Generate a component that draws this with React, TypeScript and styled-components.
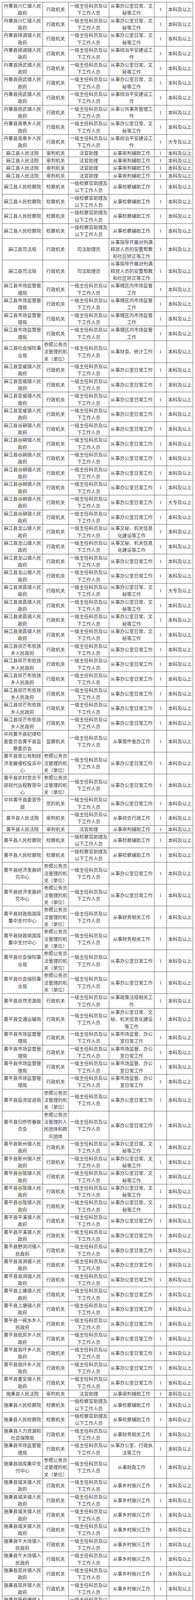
import React from 'react';
import styled, { createGlobalStyle } from 'styled-components';

const GlobalStyle = createGlobalStyle`
  html, body {
    margin: 0;
    padding: 0;
    background: #fff;
  }
`;

const Page = styled.div`
  padding: 5px 6px 6px 5px;
  background: #fff;
`;

const Sheet = styled.table`
  border-collapse: collapse;
  table-layout: fixed;
  width: 489px;
  font-family: "Noto Sans CJK SC", "Noto Sans", sans-serif;
  font-size: 12px;
  color: #3d3d3d;
`;

const Col = styled.col<{ $w: number }>`
  width: ${p => p.$w}px;
`;

const Cell = styled.td<{ $num?: boolean }>`
  border: 1px solid #5c5c5c;
  padding: 0 2px;
  line-height: 18.33px;
  text-align: center;
  vertical-align: middle;
  word-break: break-all;
  font-family: ${p => (p.$num ? '"Liberation Serif", serif' : 'inherit')};
  font-size: ${p => (p.$num ? '13px' : '12px')};
`;

const GOV = '行政机关';
const JOB = '一级主任科员及以下工作人员';
const PROC = '一级检察官助理及以下工作人员';
const REF = '参照公务员法管理的机关（单位）';
const OFFICE = '从事办公室日常工作';
const OFFICE_WM = '从事办公室日常、文秘等工作';
const RURAL = '从事乡村振兴工作';
const BK = '本科及以上';
const DZ = '大专及以上';

type Row = [string, string, string, string, string?];

const rep = (n: number, row: Row): Row[] => Array.from({ length: n }, () => row);

const rows: Row[] = [
  ...rep(2, ['丹寨县兴仁镇人民政府', GOV, JOB, OFFICE_WM]),
  ['丹寨县排调镇人民政府', GOV, JOB, OFFICE_WM],
  ['丹寨县排调镇人民政府', GOV, JOB, '从事综治平安建设工作'],
  ...rep(2, ['丹寨县扬武镇人民政府', GOV, JOB, OFFICE_WM]),
  ['丹寨县扬武镇人民政府', GOV, JOB, '从事综治平安建设工作'],
  ['丹寨县扬武镇人民政府', GOV, JOB, '从事公共事务管理工作'],
  ['丹寨县南皋乡人民政府', GOV, JOB, OFFICE_WM],
  ['丹寨县南皋乡人民政府', GOV, JOB, '从事综治平安建设工作', DZ],
  ...rep(4, ['麻江县人民法院', '审判机关', '法官助理', '从事审判辅助工作']),
  ...rep(4, ['麻江县人民检察院', '检察机关', PROC, '从事检察辅助工作']),
  ...rep(2, ['麻江县司法局', GOV, '司法助理员', '从事指导开展对刑满释放人员的安置帮教和社区矫正等工作']),
  ...rep(4, ['麻江县市场监督管理局', GOV, JOB, '从事辖区内市场监管工作']),
  ['麻江县社会保险事业局', REF, JOB, '从事财会、统计工作'],
  ...rep(4, ['麻江县宣威镇人民政府', GOV, JOB, OFFICE]),
  ...rep(5, ['麻江县谷硐镇人民政府', GOV, JOB, OFFICE]),
  ['麻江县谷硐镇人民政府', GOV, JOB, OFFICE, DZ],
  ['麻江县谷硐镇人民政府', GOV, JOB, OFFICE],
  ...rep(2, ['麻江县龙山镇人民政府', GOV, JOB, '从事文秘、机关信息化建设等工作']),
  ...rep(2, ['麻江县龙山镇人民政府', GOV, JOB, OFFICE]),
  ['麻江县贤昌镇人民政府', GOV, JOB, OFFICE_WM, DZ],
  ...rep(3, ['麻江县贤昌镇人民政府', GOV, JOB, OFFICE_WM]),
  ...rep(6, ['麻江县坝芒布依族乡人民政府', GOV, JOB, OFFICE]),
  ['中共黄平县纪律检查委员会黄平县监察委员会', '监察机关', JOB, '从事案件查办工作'],
  ['黄平县非公有制经济发展侵权投诉中心', REF, JOB, OFFICE],
  ['黄平县农村党员干部现代远程教育中心', REF, JOB, OFFICE],
  ['中共黄平县委宣传部', '党的机关', JOB, OFFICE],
  ['黄平县人民法院', '审判机关', JOB, '从事综合行政工作'],
  ['黄平县人民法院', '审判机关', '法官助理', '从事审判辅助工作'],
  ...rep(2, ['黄平县人民检察院', '检察机关', PROC, '从事检察辅助工作']),
  ...rep(2, ['黄平县经济发展研究中心', REF, JOB, OFFICE]),
  ...rep(2, ['黄平县财政局国库集中支付中心', REF, JOB, '从事财务相关工作']),
  ...rep(2, ['黄平县社会保险事业局', REF, JOB, OFFICE]),
  ['黄平县自然资源局', GOV, JOB, '从事政策法规相关工作'],
  ['黄平县交通运输局', GOV, JOB, '从事办公室日常、文秘、机关信息化建设等工作'],
  ...rep(4, ['黄平县市场监督管理局', GOV, JOB, '从事市场监管、办公室日常工作']),
  ['黄平县投资促进局', REF, JOB, OFFICE],
  ['黄平县归侨侨眷联合会', '参照公务员法管理的人民团体和群众团体', JOB, OFFICE],
  ...rep(2, ['黄平县新州镇人民政府', GOV, JOB, OFFICE_WM]),
  ...rep(3, ['黄平县谷陇镇人民政府', GOV, JOB, OFFICE_WM]),
  ...rep(2, ['黄平县平溪镇人民政府', GOV, JOB, OFFICE]),
  ['黄平县野洞河镇人民政府', GOV, JOB, OFFICE],
  ...rep(2, ['黄平县浪洞镇人民政府', GOV, JOB, OFFICE]),
  ...rep(2, ['黄平县上塘镇人民政府', GOV, JOB, OFFICE]),
  ['黄平县一碗水乡人民政府', GOV, JOB, OFFICE],
  ['黄平县纸房乡人民政府', GOV, JOB, OFFICE],
  ...rep(2, ['黄平县翁坪乡人民政府', GOV, JOB, OFFICE]),
  ['黄平县重安镇人民政府', GOV, JOB, OFFICE],
  ['施秉县人民法院', '审判机关', '法官助理', '从事审判辅助工作'],
  ...rep(2, ['施秉县人民检察院', '检察机关', PROC, '从事检察辅助工作']),
  ['施秉县人力资源和社会保障局', GOV, JOB, '从事财务相关工作'],
  ['施秉县市场监督管理局', GOV, JOB, '从事办公室、行政执法等工作'],
  ['施秉县国库集中支付中心', REF, JOB, '从事财政工作'],
  ...rep(4, ['施秉县城关镇人民政府', GOV, JOB, RURAL]),
  ...rep(2, ['施秉县牛大场镇人民政府', GOV, JOB, RURAL]),
  ...rep(2, ['施秉县双井镇人民政府', GOV, JOB, RURAL]),
  ...rep(2, ['施秉县杨柳塘镇人民政府', GOV, JOB, RURAL]),
  ['施秉县马号镇人民政府', GOV, JOB, RURAL],
];

const widths = [104, 66, 104, 116, 32, 67];

const App: React.FC = () => {
  return (
    <>
      <GlobalStyle />
      <Page>
        <Sheet>
          <colgroup>
            {widths.map((w, i) => (
              <Col key={i} $w={w} />
            ))}
          </colgroup>
          <tbody>
            {rows.map(([unit, kind, post, duty, edu], i) => (
              <tr key={i}>
                <Cell>{unit}</Cell>
                <Cell>{kind}</Cell>
                <Cell>{post}</Cell>
                <Cell>{duty}</Cell>
                <Cell $num>1</Cell>
                <Cell>{edu ?? BK}</Cell>
              </tr>
            ))}
          </tbody>
        </Sheet>
      </Page>
    </>
  );
};

export default App;
